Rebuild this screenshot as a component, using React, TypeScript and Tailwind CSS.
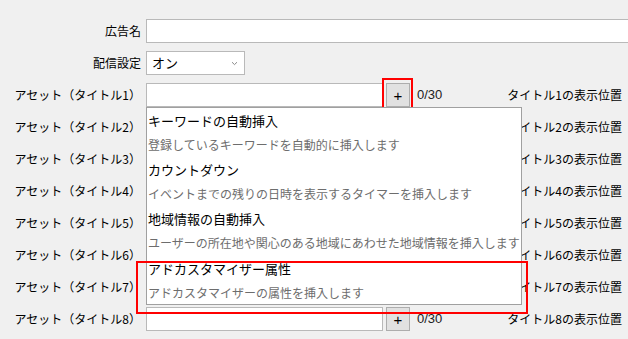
import React from "react";

const font = { fontFamily: '"Noto Sans CJK JP", "Noto Sans", sans-serif' };

const options = [
  { title: "キーワードの自動挿入", desc: "登録しているキーワードを自動的に挿入します" },
  { title: "カウントダウン", desc: "イベントまでの残りの日時を表示するタイマーを挿入します" },
  { title: "地域情報の自動挿入", desc: "ユーザーの所在地や関心のある地域にあわせた地域情報を挿入します" },
  { title: "アドカスタマイザー属性", desc: "アドカスタマイザーの属性を挿入します" },
];

function Label({ children }: { children: React.ReactNode }) {
  return (
    <div className="w-[146px] shrink-0 pr-[5px] text-right text-[12px] text-black whitespace-nowrap">
      {children}
    </div>
  );
}

function AssetRow({ n, highlight }: { n: number; highlight?: boolean }) {
  return (
    <div className="flex h-[32px] items-center">
      <Label>アセット（タイトル{n}）</Label>
      <input className="h-[24px] w-[237px] border border-[#b9b9b9] bg-white outline-none" />
      <div className="relative ml-[3px]">
        <button
          className="flex h-[24px] w-[24px] items-center justify-center border border-[#adadad] bg-[#e1e1e1] text-[15px] leading-none text-black"
          style={{ fontFamily: '"Liberation Sans", sans-serif' }}
        >
          +
        </button>
        {highlight && (
          <div className="pointer-events-none absolute -left-[4px] -top-[5px] h-[34px] w-[31px] border-2 border-[#ff0000]" />
        )}
      </div>
      <span className="ml-[7px] text-[13px] text-[#222]" style={{ fontFamily: '"Liberation Sans", sans-serif' }}>
        0/30
      </span>
      <div className="flex-1 pr-[6px] text-right text-[12px] text-black whitespace-nowrap">
        タイトル{n}の表示位置
      </div>
    </div>
  );
}

export default function App() {
  return (
    <div className="relative h-[339px] w-[628px] overflow-hidden bg-[#f0f0f0] pt-[15px]" style={font}>
      <div className="flex h-[32px] items-center">
        <Label>広告名</Label>
        <input className="h-[24px] flex-1 border border-[#b9b9b9] bg-white outline-none -mr-[4px]" />
      </div>
      <div className="flex h-[32px] items-center">
        <Label>配信設定</Label>
        <div className="flex h-[24px] w-[99px] items-center justify-between border border-[#b9b9b9] bg-white pl-[5px] pr-[6px] text-[13px]">
          <span>オン</span>
          <svg width="7" height="5" viewBox="0 0 7 5" className="mt-[1px]">
            <path d="M1 1.2 L3.5 3.6 L6 1.2" fill="none" stroke="#8a8a8a" strokeWidth="1" />
          </svg>
        </div>
      </div>
      {[1, 2, 3, 4, 5, 6, 7, 8].map((n) => (
        <AssetRow key={n} n={n} highlight={n === 1} />
      ))}

      {/* suggestion list lies over the rows */}
      <div className="absolute left-[146px] top-[107px] w-[376px] border border-[#a0a0a0] bg-white">
        {options.map((o, i) => (
          <div key={o.title} className={`flex h-[49px] flex-col justify-center pl-[1px] ${i === 3 ? "pt-[2px]" : ""}`}>
            <div className="text-[13px] leading-[24px] text-black">{o.title}</div>
            <div className="text-[12px] leading-[24px] text-[#6d6d6d] whitespace-nowrap">{o.desc}</div>
          </div>
        ))}
      </div>
      <div className="pointer-events-none absolute left-[136px] top-[261px] h-[53px] w-[392px] border-2 border-[#ff0000]" />
    </div>
  );
}
